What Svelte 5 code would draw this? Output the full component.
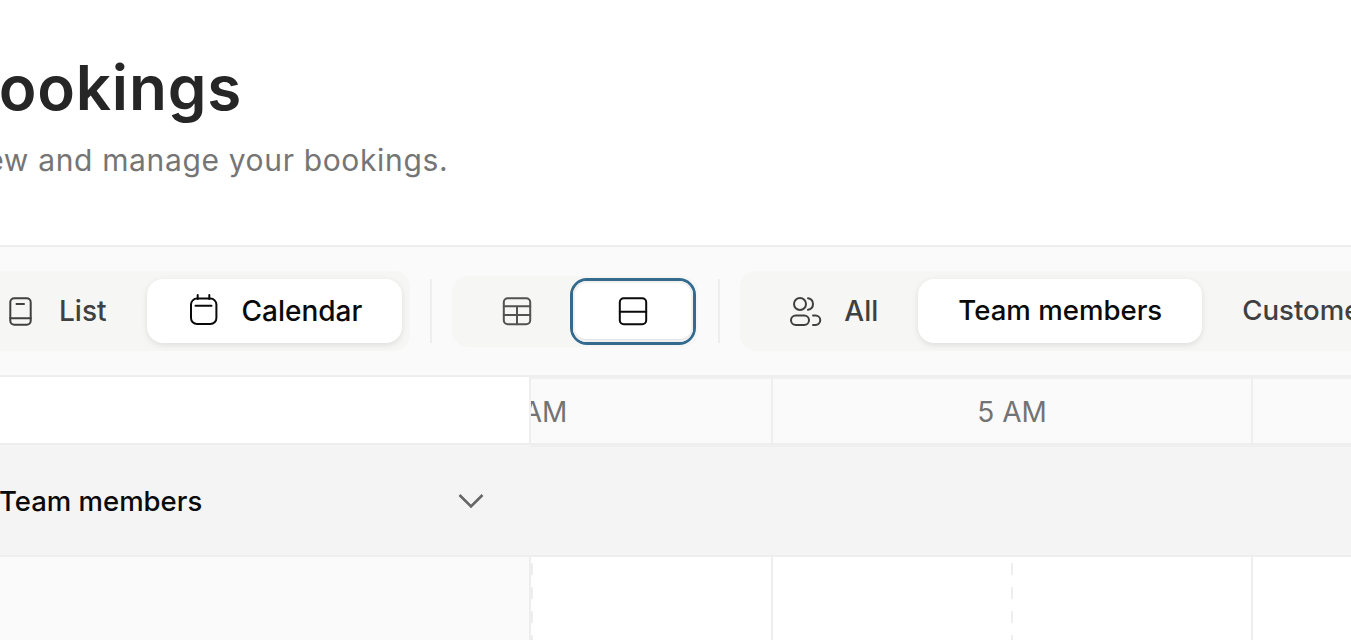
<script>
  const slots = [0, 1, 2, 3];
</script>

<div class="page">
  <header class="head">
    <h1>Bookings</h1>
    <p>View and manage your bookings.</p>
  </header>

  <div class="toolbar">
    <div class="group">
      <button class="btn">
        <svg class="ico" viewBox="0 0 32 32" aria-hidden="true">
          <rect x="6.3" y="3.3" width="20.4" height="26.4" rx="4" />
          <path d="M6.3 23.3h20.4M12.5 9h7.5" />
        </svg>
        <span>List</span>
      </button>
      <button class="btn on">
        <svg class="ico" viewBox="0 0 32 32" aria-hidden="true">
          <rect x="4" y="3.6" width="25.4" height="25.4" rx="6" />
          <path d="M10.7 0v4M22.3 0v4M8.500 10.7h16" />
        </svg>
        <span>Calendar</span>
      </button>
    </div>
    <div class="divider"></div>
    <div class="group dense">
      <button class="view first">
        <svg class="ico" viewBox="0 0 32 32" aria-hidden="true">
          <rect x="2.8" y="3.3" width="26.4" height="26" rx="4" />
          <path d="M2.8 11.2h26.4M2.8 20h26.4M16 11.2v18" />
        </svg>
      </button>
      <button class="view sel">
        <svg class="ico" viewBox="0 0 32 32" aria-hidden="true">
          <rect x="2.8" y="3.3" width="26.4" height="26" rx="4" />
          <path d="M2.8 16.7h26.4" />
        </svg>
      </button>
    </div>
    <div class="divider"></div>
    <div class="group">
      <button class="btn all">
        <svg class="ico" viewBox="0 0 32 32" aria-hidden="true">
          <circle cx="11" cy="9" r="6" />
          <path d="M19 3.2c3 .5 5 3 5 5.8s-2 5.3-5 5.8" />
          <rect x="2" y="20.5" width="18" height="9.5" rx="4.75" />
          <path d="M24 20.5h2.500a4.750 4.750 0 0 1 0 9.500H24" />
        </svg>
        <span>All</span>
      </button>
      <button class="btn on plain">Team members</button>
      <button class="btn plain">Customers</button>
    </div>
  </div>

  <div class="timehead">
    <div class="corner"></div>
    <div class="times">
      <div class="hour">4 AM</div>
      <div class="hour">5 AM</div>
      <div class="hour">6 AM</div>
    </div>
  </div>

  <div class="grouprow">
    <div class="grouplabel">
      <span>Team members</span>
      <svg class="chev" viewBox="0 0 26 16" aria-hidden="true"><path d="M1.500 2l11.500 11.500L24.500 2" /></svg>
    </div>
    <div class="groupfill"></div>
  </div>

  <div class="lane">
    <div class="lanehead"></div>
    <div class="slots">
      {#each slots as s}
        <div class="slot" class:solid={s % 2 === 1}></div>
      {/each}
    </div>
  </div>
</div>

<style>
  :global(body) {
    margin: 0;
    overflow: hidden;
    background: #fff;
  }
  .page {
    width: 1351px;
    height: 640px;
    overflow: hidden;
    display: flex;
    flex-direction: column;
    font-family: Inter, "Liberation Sans", sans-serif;
    color: #262626;
  }
  .head {
    height: 245px;
    flex: none;
    box-sizing: border-box;
    padding-top: 50px;
    margin-left: -43px;
  }
  h1 {
    margin: 0;
    font-size: 62px;
    line-height: 76px;
    font-weight: 600;
    letter-spacing: 0.8px;
    color: #262626;
    white-space: nowrap;
  }
  .head p {
    margin: 0;
    padding-top: 14px;
    font-size: 30px;
    line-height: 40px;
    letter-spacing: 0.65px;
    color: #757575;
    white-space: nowrap;
  }
  .toolbar {
    height: 130px;
    flex: none;
    box-sizing: border-box;
    border-top: 2px solid #eeeeee;
    background: #fafafa;
    display: flex;
    align-items: center;
    gap: 20px;
    margin-left: -44px;
  }
  .group {
    flex: none;
    display: flex;
    align-items: center;
    height: 80px;
    box-sizing: border-box;
    padding: 8px;
    background: #f6f6f5;
    border-radius: 16px;
  }
  .dense {
    height: 71px;
    padding: 0 5px 0 8px;
  }
  .btn {
    height: 64px;
    border: 0;
    margin: 0;
    padding: 0 40px;
    background: transparent;
    border-radius: 16px;
    display: flex;
    align-items: center;
    gap: 23px;
    font: 500 28px/1 Inter, "Liberation Sans", sans-serif;
    color: #404040;
    white-space: nowrap;
  }
  .btn.on {
    background: #fff;
    color: #0a0a0a;
    box-shadow: 0 2px 6px rgba(0, 0, 0, 0.1);
  }
  .btn.plain {
    font-size: 27.6px;
  }
  .btn.all {
    padding-left: 41px;
  }
  .ico {
    width: 32px;
    height: 32px;
    flex: none;
    display: block;
    overflow: visible;
    fill: none;
    stroke: currentColor;
    stroke-width: 2;
    stroke-linecap: round;
    stroke-linejoin: round;
  }
  .view {
    height: 61px;
    border: 0;
    margin: 0;
    padding: 0;
    background: transparent;
    display: flex;
    align-items: center;
    justify-content: center;
    color: #525252;
  }
  .first {
    width: 113px;
  }
  .sel {
    width: 120px;
    background: #fff;
    color: #0a0a0a;
    border-radius: 14px;
    box-shadow:
      inset 0 0 0 2px #f0f0f0,
      inset 0 -3px 0 #e4e4e4,
      0 0 0 3px #336b8f;
  }
  .divider {
    width: 2px;
    height: 64px;
    flex: none;
    background: #eeeeee;
  }
  .timehead {
    height: 70px;
    flex: none;
    display: flex;
    box-sizing: border-box;
    border-top: 2px solid #eeeeee;
  }
  .corner {
    width: 531px;
    flex: none;
    box-sizing: border-box;
    background: #fff;
    border-right: 2px solid #eeeeee;
    border-bottom: 2px solid #eeeeee;
  }
  .times {
    flex: 1;
    min-width: 0;
    overflow: hidden;
    display: flex;
    box-sizing: border-box;
    border-top: 2px solid #f0f0f0;
    border-bottom: 2px solid #eeeeee;
    background: #fafafa;
  }
  .hour {
    width: 480px;
    flex: none;
    box-sizing: border-box;
    border-left: 2px solid #eeeeee;
    padding-top: 1px;
    display: flex;
    align-items: center;
    justify-content: center;
    font-size: 28px;
    color: #737373;
  }
  .hour:first-child {
    margin-left: -240px;
  }
  .grouprow {
    height: 112px;
    flex: none;
    display: flex;
    background: #f4f4f4;
    box-sizing: border-box;
    border-bottom: 2px solid #eeeeee;
  }
  .grouplabel {
    width: 531px;
    flex: none;
    box-sizing: border-box;
    padding-right: 47px;
    padding-top: 2px;
    display: flex;
    align-items: center;
    justify-content: space-between;
    font-size: 27.5px;
    font-weight: 500;
    color: #0a0a0a;
  }
  .grouplabel span {
    margin-left: -1px;
  }
  .groupfill {
    flex: 1;
    border-top: 2px solid #efefef;
  }
  .chev {
    width: 26px;
    height: 16px;
    fill: none;
    stroke: #666666;
    stroke-width: 2.6;
  }
  .lane {
    flex: 1;
    display: flex;
    min-height: 0;
  }
  .lanehead {
    width: 531px;
    flex: none;
    box-sizing: border-box;
    background: #fafafa;
    border-right: 2px solid #eeeeee;
  }
  .slots {
    flex: 1;
    display: flex;
    min-width: 0;
    overflow: hidden;
  }
  .slot {
    width: 240px;
    flex: none;
    background: repeating-linear-gradient(
        transparent 0 6px,
        #eeeeee 6px 18px,
        transparent 18px 24px
      )
      left top / 2px 100% no-repeat;
  }
  .slot.solid {
    background: linear-gradient(#eeeeee, #eeeeee) left top / 2px 100% no-repeat;
  }
</style>
